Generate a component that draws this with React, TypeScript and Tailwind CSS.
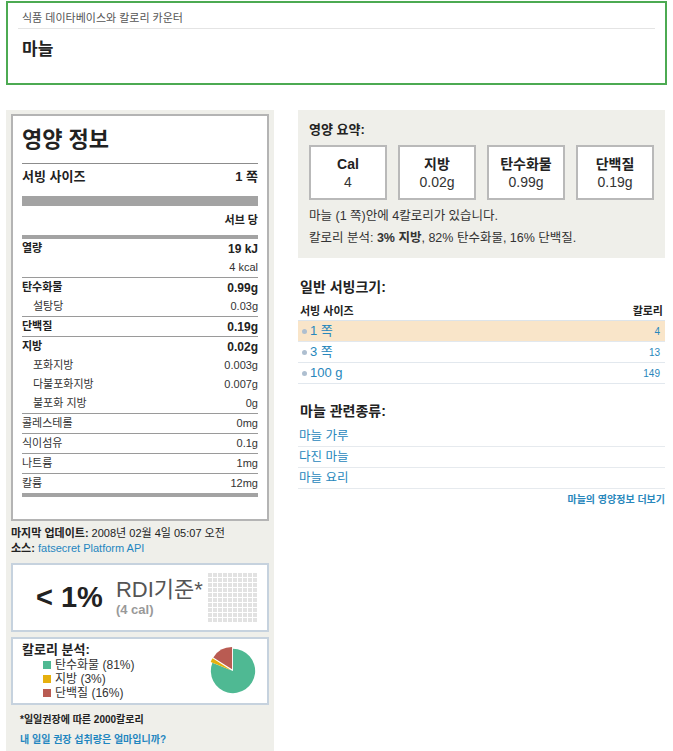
import React from "react";

const FONT = { fontFamily: '"Liberation Sans", "Noto Sans CJK KR", Arial, sans-serif' };

const NUTRIENTS: { label: string; value: string; bold?: boolean; sub?: boolean; line?: boolean }[] = [
  { label: "탄수화물", value: "0.99g", bold: true, line: true },
  { label: "설탕당", value: "0.03g", sub: true },
  { label: "단백질", value: "0.19g", bold: true, line: true },
  { label: "지방", value: "0.02g", bold: true, line: true },
  { label: "포화지방", value: "0.003g", sub: true },
  { label: "다불포화지방", value: "0.007g", sub: true },
  { label: "불포화 지방", value: "0g", sub: true },
  { label: "콜레스테롤", value: "0mg", line: true },
  { label: "식이섬유", value: "0.1g", line: true },
  { label: "나트륨", value: "1mg", line: true },
  { label: "칼륨", value: "12mg", line: true },
];

const SUMMARY = [
  { title: "Cal", value: "4" },
  { title: "지방", value: "0.02g" },
  { title: "탄수화물", value: "0.99g" },
  { title: "단백질", value: "0.19g" },
];

const SERVINGS = [
  { size: "1 쪽", cal: "4", active: true },
  { size: "3 쪽", cal: "13" },
  { size: "100 g", cal: "149" },
];

const RELATED = ["마늘 가루", "다진 마늘", "마늘 요리"];

function NutritionLabel() {
  return (
    <div className="border-2 border-[#b4b4b4] bg-white px-[9px] pb-[22px]">
      <h2 className="mt-[9px] text-[22px] leading-[30px] font-bold text-[#222]">영양 정보</h2>
      <div className="mt-[8px] border-t border-[#8c8c8c]" />
      <div className="flex h-[26px] items-center justify-between text-[13px] font-bold text-[#222]">
        <span>서빙 사이즈</span>
        <span>1 쪽</span>
      </div>
      <div className="mt-[6px] h-[10px] bg-[#a3a3a3]" />
      <div className="flex h-[29px] items-center justify-end text-[11px] font-bold text-[#222]">서브 당</div>
      <div className="h-[4px] bg-[#a3a3a3]" />
      <div className="flex h-[19px] items-center justify-between text-[11px] text-[#222]">
        <span className="font-bold">열량</span>
        <span className="text-[12px] font-bold">19 kJ</span>
      </div>
      <div className="flex h-[19px] items-center justify-end text-[11px] text-[#333]">4 kcal</div>
      {NUTRIENTS.map((n) => (
        <div
          key={n.label}
          className={`flex h-[19px] items-center justify-between text-[11px] box-content ${
            n.line ? "border-t border-[#9a9a9a]" : ""
          } ${n.bold ? "font-bold text-[#222]" : "text-[#333]"} ${n.sub ? "pl-[11px]" : ""}`}
        >
          <span>{n.label}</span>
          <span className={n.bold ? "text-[12px]" : ""}>{n.value}</span>
        </div>
      ))}
      <div className="h-[4px] bg-[#a3a3a3]" />
    </div>
  );
}

function RdiGrid() {
  return (
    <div className="grid grid-cols-10 gap-[1px]">
      {Array.from({ length: 100 }).map((_, i) => (
        <div key={i} className="h-[4px] w-[4px] bg-[#e2e2e2]" />
      ))}
    </div>
  );
}

function Pie() {
  return (
    <svg width="52" height="52" viewBox="-3 -3 54 54">
      <path d="M24 24 L24 1 A23 23 0 1 1 2.615 15.534 Z" fill="#4fb993" />
      <path d="M24 24 L2.615 15.534 A23 23 0 0 1 4.58 11.68 Z" fill="#e6b00e" transform="translate(-1.8 -0.9)" />
      <path d="M24 24 L4.58 11.68 A23 23 0 0 1 24 1 Z" fill="#b95b52" transform="translate(-1 -1.8)" />
    </svg>
  );
}

function LeftColumn() {
  return (
    <div className="w-[268px] shrink-0 bg-[#efefea] px-[5px] pt-[4px] pb-[12px] min-h-[641px]">
      <NutritionLabel />
      <div className="mt-[5px] text-[11px] leading-[15px] text-[#222]">
        <div>
          <span className="font-bold">마지막 업데이트:</span> 2008년 02월 4일 05:07 오전
        </div>
        <div>
          <span className="font-bold">소스:</span> <span className="text-[#1f86c0]">fatsecret Platform API</span>
        </div>
      </div>
      <div className="mt-[7px] flex h-[69px] items-center border-2 border-[#c6d2de] bg-white pl-[23px] pr-[10px]">
        <span className="text-[29px] font-bold text-[#222]">&lt; 1%</span>
        <div className="ml-[13px] flex flex-col">
          <span className="text-[22px] leading-[24px] text-[#555]">RDI기준*</span>
          <span className="text-[13px] leading-[16px] font-bold text-[#999]">(4 cal)</span>
        </div>
        <div className="ml-auto">
          <RdiGrid />
        </div>
      </div>
      <div className="mt-[5px] flex h-[68px] items-center border-2 border-[#c6d2de] bg-white pl-[9px] pr-[8px]">
        <div className="flex flex-col">
          <span className="text-[13px] leading-[16px] font-bold text-[#222]">칼로리 분석:</span>
          <div className="pl-[21px] text-[12px] leading-[14px] text-[#333]">
            <div className="flex items-center gap-[4px]">
              <span className="h-[8px] w-[8px] bg-[#4fb993]" />탄수화물 (81%)
            </div>
            <div className="flex items-center gap-[4px]">
              <span className="h-[8px] w-[8px] bg-[#e6b00e]" />지방 (3%)
            </div>
            <div className="flex items-center gap-[4px]">
              <span className="h-[8px] w-[8px] bg-[#b95b52]" />단백질 (16%)
            </div>
          </div>
        </div>
        <div className="ml-auto">
          <Pie />
        </div>
      </div>
      <div className="mt-[8px] pl-[9px] text-[10px] font-bold leading-[14px]">
        <div className="text-[#222]">*일일권장에 따른 2000칼로리</div>
        <div className="mt-[6px] text-[#1f86c0]">내 일일 권장 섭취량은 얼마입니까?</div>
      </div>
    </div>
  );
}

function RightColumn() {
  return (
    <div className="flex-1">
      <div className="bg-[#efefea] px-[11px] pt-[12px] pb-[9px]">
        <h3 className="text-[13px] leading-[16px] font-bold text-[#222]">영양 요약:</h3>
        <div className="mt-[7px] grid grid-cols-4 gap-[11px]">
          {SUMMARY.map((s) => (
            <div
              key={s.title}
              className="flex h-[55px] flex-col items-center justify-center border-2 border-[#b9b9b9] bg-white text-[14px] leading-[18px] text-[#222]"
            >
              <span className="font-bold">{s.title}</span>
              <span className="text-[#333]">{s.value}</span>
            </div>
          ))}
        </div>
        <p className="mt-[5px] text-[12.5px] leading-[22px] text-[#333]">마늘 (1 쪽)안에 4칼로리가 있습니다.</p>
        <p className="text-[12.5px] leading-[22px] text-[#333]">
          칼로리 분석: <span className="font-bold">3% 지방</span>, 82% 탄수화물, 16% 단백질.
        </p>
      </div>

      <h3 className="mt-[20px] px-[2px] text-[14px] leading-[18px] font-bold text-[#222]">일반 서빙크기:</h3>
      <div className="mt-[7px] flex h-[18px] items-center justify-between border-b border-[#dde4ea] px-[2px] text-[11px] font-bold text-[#222]">
        <span>서빙 사이즈</span>
        <span>칼로리</span>
      </div>
      {SERVINGS.map((s) => (
        <div
          key={s.size}
          className={`flex h-[20px] items-center justify-between border-b border-[#e2e8ee] pl-[4px] pr-[5px] box-content ${
            s.active ? "bg-[#f9e5c9]" : ""
          }`}
        >
          <span className="flex items-center gap-[3px] text-[13px] text-[#2887bc]">
            <span className="h-[5px] w-[5px] rounded-full bg-[#aebfd0]" />
            {s.size}
          </span>
          <span className="text-[10px] text-[#2887bc]">{s.cal}</span>
        </div>
      ))}

      <h3 className="mt-[18px] px-[2px] text-[14px] leading-[18px] font-bold text-[#222]">마늘 관련종류:</h3>
      <div className="mt-[6px]">
        {RELATED.map((r) => (
          <div key={r} className="flex h-[20px] items-center border-b border-[#e6eaee] px-[1px] text-[12.5px] text-[#2887bc] box-content">
            {r}
          </div>
        ))}
      </div>
      <div className="mt-[4px] text-right text-[10px] leading-[14px] font-bold text-[#2887bc]">마늘의 영양정보 더보기</div>
    </div>
  );
}

export default function App() {
  return (
    <div className="min-h-[751px] bg-white" style={FONT}>
      <div className="mx-[6px] mt-[1px] h-[84px] border-2 border-[#4caa52] px-[10px]">
        <div className="pt-[8px] pl-[4px] text-[11px] leading-[14px] text-[#555]">식품 데이타베이스와 칼로리 카운터</div>
        <div className="mt-[3px] border-t border-[#e4e4e4]" />
        <h1 className="mt-[10px] pl-[4px] text-[17px] leading-[22px] font-bold text-[#222]">마늘</h1>
      </div>
      <div className="mt-[25px] flex gap-[24px] pl-[6px] pr-[8px]">
        <LeftColumn />
        <RightColumn />
      </div>
    </div>
  );
}
